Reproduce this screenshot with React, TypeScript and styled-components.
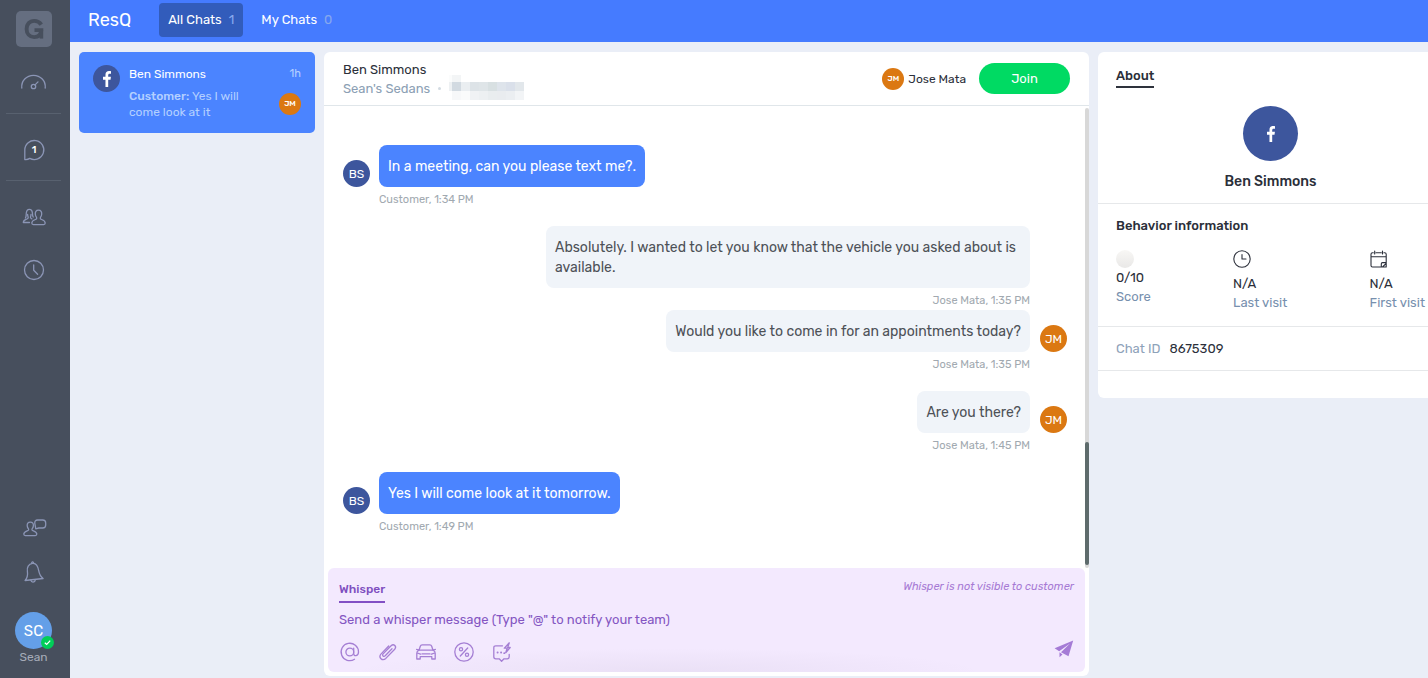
import React from 'react';
import styled, { createGlobalStyle, css } from 'styled-components';

const GlobalStyle = createGlobalStyle`
  *, *::before, *::after { box-sizing: border-box; }
  body {
    margin: 0;
    background: #eaeef7;
    color: #2b2f3a;
    font-family: Rubik, Roboto, "Liberation Sans", sans-serif;
    font-size: 13px;
    line-height: 20px;
  }
  button, input { font: inherit; color: inherit; }
  button { border: 0; padding: 0; background: none; cursor: pointer; }
  h1, h2, h3, p, dl, dd { margin: 0; }
  svg { display: block; flex: none; }
`;

const Shell = styled.div`
  display: flex;
  min-height: 100vh;
  overflow: hidden;
`;

const Sidebar = styled.nav`
  flex: 0 0 70px;
  display: flex;
  flex-direction: column;
  padding: 11px 9px 13px 6px;
  background: #474f5d;
  color: #8b95b5;
`;

const Logo = styled.div`
  align-self: center;
  width: 36px;
  height: 36px;
  border-radius: 5px;
  background: #656e80;
  color: #474f5d;
`;

const NavGroup = styled.div<{ $divided?: boolean }>`
  display: flex;
  flex-direction: column;
  align-items: center;
  gap: 29px;
  padding: 24px 0 18px;
  border-bottom: 1px solid ${(p) => (p.$divided ? '#58616f' : 'transparent')};
`;

const NavButton = styled.button`
  height: 24px;
`;

const SidebarFoot = styled.div`
  display: flex;
  flex-direction: column;
  align-items: center;
  gap: 20px;
  margin-top: auto;
`;

const Account = styled.button`
  display: flex;
  flex-direction: column;
  align-items: center;
  margin-top: 8px;
  color: #a5abb8;
  font-size: 12px;
  line-height: 16px;
`;

const AccountAvatar = styled.span`
  position: relative;
  display: grid;
  place-items: center;
  width: 37px;
  height: 37px;
  border-radius: 50%;
  background: #649fe8;
  color: #fff;
  font-size: 15px;
`;

const Online = styled.span`
  position: absolute;
  right: -2px;
  bottom: 0;
`;

const Page = styled.div`
  flex: 1;
  min-width: 0;
  display: flex;
  flex-direction: column;
`;

const TopBar = styled.header`
  display: flex;
  align-items: center;
  gap: 28px;
  padding: 3px 18px 5px;
  background: #457bff;
  color: #fff;
`;

const Brand = styled.h1`
  font-size: 18px;
  line-height: 24px;
  font-weight: 400;
`;

const Tabs = styled.div`
  display: flex;
  gap: 9px;
`;

const Tab = styled.button<{ $active?: boolean }>`
  display: flex;
  align-items: center;
  gap: 7px;
  height: 34px;
  padding: 0 9px;
  border-radius: 4px;
  background: ${(p) => (p.$active ? '#325cbb' : 'transparent')};
  font-weight: 400;
`;

const TabCount = styled.span`
  color: #86a8ee;
`;

const Workspace = styled.main`
  flex: 1;
  display: flex;
  gap: 9px;
  padding: 10px 0 2px 9px;
`;

const ChatList = styled.section`
  flex: 0 0 236px;
`;

const ChatCard = styled.button`
  display: flex;
  gap: 9px;
  width: 100%;
  padding: 13px 14px;
  border-radius: 5px;
  background: #4b84ff;
  color: #b4d0ff;
  text-align: left;
  font-size: 12px;
  line-height: 16px;
`;

const CardBody = styled.span`
  flex: 1;
  display: flex;
  flex-direction: column;
  gap: 5px;
`;

const CardLine = styled.span`
  display: flex;
  justify-content: space-between;
  align-items: center;
`;

const CardName = styled.span`
  color: #fff;
  line-height: 18px;
`;

const CardTime = styled.span`
  font-size: 11px;
`;

const CardPreview = styled.span`
  width: 130px;
  b { font-weight: 500; }
`;

const Avatar = styled.span<{ $size: 'small' | 'medium' | 'large'; $color: string }>`
  flex: none;
  display: grid;
  place-items: center;
  border-radius: 50%;
  background: ${(p) => p.$color};
  color: #fff;
  ${(p) =>
    p.$size === 'small'
      ? css`width: 22px; height: 22px; font-size: 8px; font-weight: 500;`
      : p.$size === 'medium'
        ? css`width: 27px; height: 27px; font-size: 12px;`
        : css`width: 55px; height: 55px;`}
`;

const Conversation = styled.section`
  flex: 1;
  min-width: 0;
  display: flex;
  flex-direction: column;
  border-radius: 6px;
  background: #fff;
`;

const ConversationHeader = styled.header`
  display: flex;
  justify-content: space-between;
  align-items: flex-start;
  padding: 0 19px;
  border-bottom: 1px solid #e0e6ea;
`;

const Contact = styled.div`
  padding: 8px 0 7px;
`;

const ContactName = styled.h2`
  font-size: 13px;
  line-height: 19px;
  font-weight: 400;
  color: #2b2f3a;
`;

const ContactSub = styled.div`
  display: flex;
  align-items: center;
  gap: 8px;
  height: 19px;
  color: #8c9fb4;
`;

const Dot = styled.span`
  width: 3px;
  height: 3px;
  border-radius: 50%;
  background: #d3dbe2;
`;

const Agent = styled.div`
  display: flex;
  align-items: center;
  gap: 4px;
  padding-top: 11px;
  font-size: 12px;
`;

const JoinButton = styled.button`
  width: 91px;
  height: 31px;
  margin-left: 9px;
  border-radius: 16px;
  background: #00da63;
  color: #fff;
  font-size: 13px;
`;

const Scroller = styled.div`
  flex: 1;
  display: flex;
`;

const Messages = styled.ol`
  flex: 1;
  display: flex;
  flex-direction: column;
  margin: 0;
  padding: 39px 18px 32px 19px;
  list-style: none;
`;

const Track = styled.div`
  display: flex;
  flex-direction: column;
  justify-content: flex-end;
  width: 4px;
  margin-top: 2px;
  padding-bottom: 3px;
  border-radius: 2px;
  background: #d8d8d8;
`;

const Thumb = styled.div`
  height: 27%;
  border-radius: 2px;
  background: #5e6b6c;
`;

const Message = styled.li<{ $own?: boolean; $tight?: boolean }>`
  display: grid;
  grid-template-columns: ${(p) => (p.$own ? 'minmax(0, 1fr) 27px' : '27px minmax(0, 1fr)')};
  justify-items: ${(p) => (p.$own ? 'end' : 'start')};
  align-items: end;
  column-gap: ${(p) => (p.$own ? '10px' : '9px')};
  row-gap: 5px;
  margin-bottom: ${(p) => (p.$tight ? '1px' : '18px')};
  &:last-child { margin-bottom: 0; }
`;

const Bubble = styled.p<{ $own?: boolean }>`
  grid-column: ${(p) => (p.$own ? 1 : 2)};
  max-width: 484px;
  padding: 12px 9px 10px;
  border-radius: 8px;
  font-size: 14px;
  background: ${(p) => (p.$own ? '#f0f4f9' : '#4b84ff')};
  color: ${(p) => (p.$own ? '#4d5157' : '#fff')};
`;

const Meta = styled.span<{ $own?: boolean }>`
  grid-column: ${(p) => (p.$own ? 1 : 2)};
  color: #a1a9b0;
  font-size: 11px;
  line-height: 16px;
`;

const Composer = styled.form`
  display: flex;
  flex-direction: column;
  margin: 0 4px 4px;
  padding: 9px 11px 8px;
  border-radius: 6px;
  background:
    radial-gradient(ellipse 42% 24px at 45% 100%, rgba(90, 80, 110, 0.06), rgba(90, 80, 110, 0)),
    #f3e9fe;
  color: #7f4fc0;
`;

const ComposerTop = styled.div`
  display: flex;
  justify-content: space-between;
  align-items: flex-start;
`;

const WhisperTab = styled.button`
  height: 26px;
  border-bottom: 2px solid #8250c4;
  font-size: 12px;
  font-weight: 500;
`;

const Hint = styled.em`
  color: #a679d4;
  font-size: 11px;
`;

const WhisperInput = styled.input`
  width: 100%;
  height: 20px;
  margin-top: 7px;
  padding: 0;
  border: 0;
  outline: 0;
  background: transparent;
  &::placeholder { color: #8456c2; opacity: 1; }
`;

const Tools = styled.div`
  display: flex;
  align-items: center;
  gap: 16px;
  height: 24px;
  margin-top: 10px;
  color: #a57fd4;
`;

const ToolButton = styled.button`
  width: 22px;
  height: 22px;
`;

const SendButton = styled.button`
  margin-left: auto;
  padding-bottom: 6px;
`;

const About = styled.aside`
  flex: 0 0 345px;
  align-self: flex-start;
  margin-right: -15px;
  padding-bottom: 27px;
  border-radius: 6px;
  background: #fff;
`;

const AboutSection = styled.section`
  padding: 0 18px;
  border-bottom: 1px solid #e6e8ea;
`;

const AboutTab = styled.button`
  height: 22px;
  margin-top: 14px;
  border-bottom: 2px solid #2e323c;
  font-weight: 500;
`;

const Profile = styled.div`
  display: flex;
  flex-direction: column;
  align-items: center;
  gap: 11px;
  padding: 18px 0 11px;
`;

const Title = styled.h3`
  font-size: 13px;
  line-height: 20px;
  font-weight: 500;
`;

const ProfileName = styled(Title)`
  font-size: 14px;
`;

const BehaviorTitle = styled(Title)`
  padding-top: 12px;
`;

const Stats = styled.div`
  display: flex;
  justify-content: space-between;
  padding: 14px 0;
`;

const Stat = styled.div<{ $flush?: boolean }>`
  display: flex;
  flex-direction: column;
  line-height: 19px;
  svg { margin-bottom: ${(p) => (p.$flush ? 0 : '6px')}; }
`;

const StatLabel = styled.span`
  color: #7790ae;
`;

const ChatId = styled.dl`
  display: flex;
  gap: 9px;
  padding: 12px 0 11px;
  dt { color: #8ea2b9; }
`;

const stroke = {
  fill: 'none',
  stroke: 'currentColor',
  strokeWidth: 1.3,
  strokeLinecap: 'round' as const,
  strokeLinejoin: 'round' as const,
};

const LogoMark = () => (
  <svg width="36" height="36" viewBox="0 0 36 36" aria-label="G">
    <path d="M25.3 13.600C23.600 11 21 9.900 18.200 9.900c-4.700 0-7.600 3.400-7.600 8.100s2.900 8.100 7.500 8.100c4.200 0 7-2.400 7.200-7H18.500" fill="none" stroke="currentColor" strokeWidth="3.900" />
    <path d="M23.700 19h3.500v8.600h-3.500z" fill="currentColor" />
  </svg>
);

const GaugeIcon = () => (
  <svg width="27" height="24" viewBox="0 0 27 24" {...stroke}>
    <path d="M1.800 17C1 10 6.500 4.300 13.500 4.300S26 10 25.200 17" />
    <circle cx="13.500" cy="15.500" r="2.200" />
    <path d="M15 13.900l3-3" />
  </svg>
);

const BubbleIcon = () => (
  <svg width="24" height="24" viewBox="0 0 24 24" {...stroke}>
    <path d="M2.800 21.500V12a9.500 9.500 0 1 1 5 8.400c-1.600 1-3.200 1.300-5 1.100z" />
    <text x="12" y="15" textAnchor="middle" fontSize="10" fontWeight="500" fill="#fff" stroke="none">1</text>
  </svg>
);

const UsersIcon = () => (
  <svg width="24" height="24" viewBox="0 0 24 24" {...stroke}>
    <path d="M3.400 13c1-1.500.7-3.200.9-5 .3-2.200 1.200-3.600 3-3.600s2.900 1.400 3.100 3.600c.1 1.500 0 2.700.8 4" />
    <path d="M5.600 9.500c0 1.500.6 2.300.6 3s-.4 1.200-1.200 1.500c-2.200.7-3.700 1-3.700 3.500h6.200M9 9.500c0 1.500-.6 2.300-.5 3 .1.600.5 1 1.300 1.400" />
    <path d="M16.500 5.200c-2.500 0-3.300 1.800-3.200 3.800.1 1.600.7 2.700 1.300 3.400.4 1-.1 1.600-.9 2-2.200.8-3.900 1.300-3.900 3.700 0 1 .6 1.500 1.600 1.500h10.300c1 0 1.500-.5 1.500-1.500 0-2.400-1.700-2.900-3.900-3.700-.8-.4-1.300-1-.9-2 .6-.7 1.200-1.800 1.300-3.400.1-2-.7-3.800-3.200-3.800z" />
  </svg>
);

const ClockIcon = () => (
  <svg width="24" height="24" viewBox="0 0 24 24" {...stroke}>
    <circle cx="12" cy="12" r="9.500" />
    <path d="M11.700 6.800v5.400l3.900 4" />
  </svg>
);

const PersonChatIcon = () => (
  <svg width="26" height="24" viewBox="0 0 26 24" {...stroke}>
    <path d="M9.300 6.200c-2.400 0-3.200 1.600-3.100 3.400.1 1.500.7 2.600 1.300 3.300.4.900 0 1.400-.8 1.700-2.200.8-3.900 1.200-3.900 3.500 0 1 .5 1.500 1.500 1.500h10c1 0 1.500-.5 1.500-1.500 0-2.300-1.700-2.700-3.900-3.500-.8-.3-1.200-.8-.8-1.700.6-.7 1.200-1.800 1.300-3.300.1-1.800-.7-3.400-3.100-3.400z" />
    <path d="M14.800 12.800l-1-5.500c-.2-1.800.8-3.300 2.700-3.300h5.200c2 0 3 1.200 3 3v2c0 1.800-1.200 3-3 3h-4z" />
  </svg>
);

const BellIcon = () => (
  <svg width="24" height="24" viewBox="0 0 24 24" {...stroke}>
    <path d="M10.500 3.400c-4 .7-5.800 4-5.100 8 .6 4 .2 6.300-2.300 9.100l18-2c-3-2.200-3.700-4-4.400-7.800-.8-4.600-2.800-7.800-6.200-7.300z" />
    <path d="M9.700 3.400c-.3-1.700 1.600-2.100 2-.3M8.800 20.200c.6 2.600 4.200 2.500 4.600-.5" />
  </svg>
);

const CheckBadge = () => (
  <svg width="13" height="13" viewBox="0 0 13 13">
    <circle cx="6.500" cy="6.500" r="6.500" fill="#00ce58" />
    <path d="M3.800 6.700l1.900 1.700 3.500-3.700" fill="none" stroke="#fff" strokeWidth="1.200" />
  </svg>
);

const FacebookIcon = () => (
  <svg width="8" height="16" viewBox="0 0 10 20">
    <path d="M6.500 20v-9.200h2.900l.5-3.500H6.500V5.200c0-1.100.4-1.900 1.900-1.900H10V.200C9.700.1 8.700 0 7.500 0 4.900 0 3.100 1.600 3.100 4.600v2.700H0v3.500h3.100V20z" fill="#fff" />
  </svg>
);

const maskCells: [number, number, number, number, string][] = [
  [0, 0, 3, 7, '#fbfcfc'], [3, 0, 9, 7, '#f3f5f6'],
  [0, 7, 3, 9, '#eef1f3'], [3, 7, 9, 9, '#d2dae1'], [12, 7, 9, 9, '#eaeef1'], [21, 7, 9, 9, '#dde3e7'],
  [30, 7, 9, 9, '#dfe5e8'], [39, 7, 9, 9, '#d8e0e2'], [48, 7, 9, 9, '#dee4eb'], [57, 7, 9, 9, '#dae0ea'], [66, 7, 9, 9, '#e2e7eb'],
  [3, 16, 9, 9, '#f7f8f9'], [12, 16, 9, 9, '#fafbfb'], [21, 16, 9, 9, '#f0f2f4'],
  [30, 16, 9, 9, '#edf0f2'], [39, 16, 9, 9, '#e9edef'], [48, 16, 9, 9, '#e9ecef'], [57, 16, 9, 9, '#ebeef1'], [66, 16, 9, 9, '#f2f4f6'],
];

const MaskedPhone = () => (
  <svg width="75" height="28" viewBox="0 0 75 28" shapeRendering="crispEdges">
    {maskCells.map(([x, y, w, h, fill]) => (
      <rect key={`${x}-${y}`} x={x} y={y} width={w} height={h} fill={fill} />
    ))}
  </svg>
);

const AtIcon = () => (
  <svg width="22" height="22" viewBox="0 0 22 22" {...stroke}>
    <circle cx="10.800" cy="11" r="3.900" />
    <path d="M14.700 7.200v5.600c0 2.900 4.800 2.400 4.800-1.800a8.700 8.700 0 1 0-4 7.300" />
  </svg>
);

const ClipIcon = () => (
  <svg width="22" height="22" viewBox="0 0 22 22" {...stroke}>
    <path d="M15 7.800l-6.800 7c-1.500 1.400-3.500-.4-2.100-1.900l8-8.200c2.700-2.500 6 .8 3.600 3.500l-8.900 9.200c-3.500 3.200-7.800-.9-4.700-4.500l7.600-7.900" />
  </svg>
);

const CarIcon = () => (
  <svg width="22" height="22" viewBox="0 0 22 22" {...stroke}>
    <path d="M4 9.200l1.300-4c.3-.9.900-1.300 1.800-1.300h7.800c.9 0 1.500.4 1.800 1.300L18 9.200M1.600 8.400L4 9.200h14l2.400-.8" />
    <path d="M4 9.200c-1.500.6-2.200 1.700-2.200 3V18h3.400v-2.300h11.600V18h3.400v-5.800c0-1.300-.7-2.400-2.200-3M2.300 12l3.200 1.200M19.700 12l-3.200 1.200M7 12.900h8" />
  </svg>
);

const PercentIcon = () => (
  <svg width="22" height="22" viewBox="0 0 22 22" {...stroke}>
    <circle cx="11" cy="11" r="9.200" />
    <circle cx="8" cy="8.300" r="1.600" />
    <circle cx="14" cy="13.700" r="1.600" />
    <path d="M14.700 7l-7.400 8" />
  </svg>
);

const QuickReplyIcon = () => (
  <svg width="22" height="22" viewBox="0 0 22 22" {...stroke}>
    <path d="M11.500 4.800H4.800c-1.300 0-2 .7-2 2v9c0 1.300.7 2 2 2h3.400l2.400 2.400 2.400-2.400h3.200c1.300 0 2-.7 2-2v-2.500" />
    <path d="M18.300 1.800l-5 5.400h2.900l-1.500 4.500 4.500-5.200h-2.500z" />
    <path d="M6.500 11.500h.2M10 11.500h.2M13.200 12.200h.2" strokeWidth="1.800" />
  </svg>
);

const SendIcon = () => (
  <svg width="20" height="18" viewBox="0 0 20 18">
    <path d="M19.200.6L.6 8.200l4.600 3.100L16 3.400 7 12.200l7.500 4z" fill="#a57bd6" />
    <path d="M5.500 12.300v5l3-2.800z" fill="#a57bd6" />
  </svg>
);

const LastVisitIcon = () => (
  <svg width="18" height="18" viewBox="0 0 18 18" {...stroke} strokeWidth="1.100">
    <circle cx="9" cy="9" r="8.200" />
    <path d="M9 4.500V9h4" />
  </svg>
);

const FirstVisitIcon = () => (
  <svg width="18" height="18" viewBox="0 0 18 18" {...stroke} strokeWidth="1.100">
    <path d="M3.300 2.800H2.500C1.500 2.800 1 3.300 1 4.300v11.200c0 1 .5 1.500 1.500 1.500h10l3.700-3.700v-9c0-1-.5-1.500-1.500-1.500h-.8M6 2.800h5.300M1 6.700h15.200M4.700 1v3M12.500 1v3M11.300 17v-3.200c0-.8.4-1.200 1.200-1.200h3.700V17z" />
  </svg>
);

const ScoreIcon = () => (
  <svg width="18" height="18" viewBox="0 0 18 18">
    <defs>
      <linearGradient id="score" x1="0" y1="0" x2="0" y2="1">
        <stop offset="0" stopColor="#f8f7f5" />
        <stop offset="1" stopColor="#e9e8e7" />
      </linearGradient>
    </defs>
    <circle cx="9" cy="9" r="9" fill="url(#score)" />
  </svg>
);

const NAVY = '#3d569d';
const ORANGE = '#db7812';

type ChatMessage = { text: string; meta: string; own?: boolean; avatar?: string; tight?: boolean };

const messages: ChatMessage[] = [
  { text: 'In a meeting, can you please text me?.', meta: 'Customer, 1:34 PM', avatar: 'BS' },
  { text: 'Absolutely. I wanted to let you know that the vehicle you asked about is available.', meta: 'Jose Mata, 1:35 PM', own: true, tight: true },
  { text: 'Would you like to come in for an appointments today?', meta: 'Jose Mata, 1:35 PM', own: true, avatar: 'JM' },
  { text: 'Are you there?', meta: 'Jose Mata, 1:45 PM', own: true, avatar: 'JM' },
  { text: 'Yes I will come look at it tomorrow.', meta: 'Customer, 1:49 PM', avatar: 'BS' },
];

const tools = [
  { label: 'Mention', Icon: AtIcon },
  { label: 'Attach file', Icon: ClipIcon },
  { label: 'Vehicles', Icon: CarIcon },
  { label: 'Offers', Icon: PercentIcon },
  { label: 'Quick replies', Icon: QuickReplyIcon },
];

function MessageRow({ text, meta, own, avatar, tight }: ChatMessage) {
  const face = avatar && (
    <Avatar $size="medium" $color={own ? ORANGE : NAVY}>{avatar}</Avatar>
  );
  return (
    <Message $own={own} $tight={tight}>
      {!own && face}
      <Bubble $own={own}>{text}</Bubble>
      {own && face}
      <Meta $own={own}>{meta}</Meta>
    </Message>
  );
}

export default function App() {
  return (
    <>
      <GlobalStyle />
      <Shell>
        <Sidebar aria-label="Main">
          <Logo><LogoMark /></Logo>
          <NavGroup $divided>
            <NavButton aria-label="Dashboard"><GaugeIcon /></NavButton>
          </NavGroup>
          <NavGroup $divided>
            <NavButton aria-label="Chats"><BubbleIcon /></NavButton>
          </NavGroup>
          <NavGroup>
            <NavButton aria-label="Customers"><UsersIcon /></NavButton>
            <NavButton aria-label="History"><ClockIcon /></NavButton>
          </NavGroup>
          <SidebarFoot>
            <NavButton aria-label="Team chat"><PersonChatIcon /></NavButton>
            <NavButton aria-label="Notifications"><BellIcon /></NavButton>
            <Account>
              <AccountAvatar>SC<Online><CheckBadge /></Online></AccountAvatar>
              Sean
            </Account>
          </SidebarFoot>
        </Sidebar>

        <Page>
          <TopBar>
            <Brand>ResQ</Brand>
            <Tabs>
              <Tab $active>All Chats <TabCount>1</TabCount></Tab>
              <Tab>My Chats <TabCount>0</TabCount></Tab>
            </Tabs>
          </TopBar>

          <Workspace>
            <ChatList aria-label="Chats">
              <ChatCard>
                <Avatar $size="medium" $color={NAVY}><FacebookIcon /></Avatar>
                <CardBody>
                  <CardLine><CardName>Ben Simmons</CardName><CardTime>1h</CardTime></CardLine>
                  <CardLine>
                    <CardPreview><b>Customer:</b> Yes I will come look at it</CardPreview>
                    <Avatar $size="small" $color={ORANGE}>JM</Avatar>
                  </CardLine>
                </CardBody>
              </ChatCard>
            </ChatList>

            <Conversation aria-label="Conversation">
              <ConversationHeader>
                <Contact>
                  <ContactName>Ben Simmons</ContactName>
                  <ContactSub>Sean's Sedans <Dot /> <MaskedPhone /></ContactSub>
                </Contact>
                <Agent>
                  <Avatar $size="small" $color={ORANGE}>JM</Avatar>
                  Jose Mata
                  <JoinButton>Join</JoinButton>
                </Agent>
              </ConversationHeader>
              <Scroller>
                <Messages>
                  {messages.map((m) => <MessageRow key={m.text} {...m} />)}
                </Messages>
                <Track><Thumb /></Track>
              </Scroller>
              <Composer>
                <ComposerTop>
                  <WhisperTab type="button">Whisper</WhisperTab>
                  <Hint>Whisper is not visible to customer</Hint>
                </ComposerTop>
                <WhisperInput
                  aria-label="Whisper message"
                  placeholder={'Send a whisper message (Type "@" to notify your team)'}
                />
                <Tools>
                  {tools.map(({ label, Icon }) => (
                    <ToolButton key={label} type="button" aria-label={label}><Icon /></ToolButton>
                  ))}
                  <SendButton type="button" aria-label="Send"><SendIcon /></SendButton>
                </Tools>
              </Composer>
            </Conversation>

            <About>
              <AboutSection>
                <AboutTab>About</AboutTab>
                <Profile>
                  <Avatar $size="large" $color={NAVY}><FacebookIcon /></Avatar>
                  <ProfileName>Ben Simmons</ProfileName>
                </Profile>
              </AboutSection>
              <AboutSection>
                <BehaviorTitle>Behavior information</BehaviorTitle>
                <Stats>
                  <Stat $flush><ScoreIcon /><span>0/10</span><StatLabel>Score</StatLabel></Stat>
                  <Stat><LastVisitIcon /><span>N/A</span><StatLabel>Last visit</StatLabel></Stat>
                  <Stat><FirstVisitIcon /><span>N/A</span><StatLabel>First visit</StatLabel></Stat>
                </Stats>
              </AboutSection>
              <AboutSection>
                <ChatId><dt>Chat ID</dt><dd>8675309</dd></ChatId>
              </AboutSection>
            </About>
          </Workspace>
        </Page>
      </Shell>
    </>
  );
}
